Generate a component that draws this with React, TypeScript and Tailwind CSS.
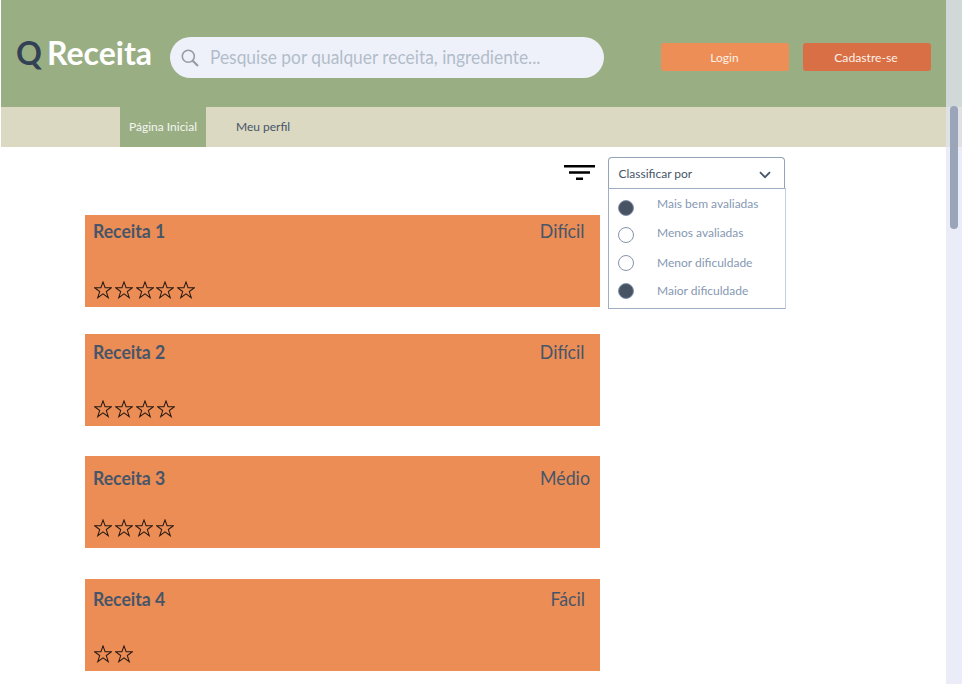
type Recipe = {
  name: string;
  level: string;
  card: string;
  title: string;
  levelBox: string;
  stars: string;
  gaps: string[];
};

const recipes: Recipe[] = [
  { name: "Receita 1", level: "Difícil", card: "", title: "pt-[4px]", levelBox: "pr-[15px]", stars: "mt-[38px]", gaps: ["", "ml-[3.3px]", "ml-[3.3px]", "ml-[1.7px]", "ml-[3.3px]"] },
  { name: "Receita 2", level: "Difícil", card: "mt-[27px]", title: "pt-[6px]", levelBox: "pr-[15px]", stars: "mt-[36px]", gaps: ["", "ml-[3.3px]", "ml-[3.3px]", "ml-[3.3px]"] },
  { name: "Receita 3", level: "Médio", card: "mt-[30px]", title: "pt-[10px]", levelBox: "pr-[10.5px]", stars: "mt-[29px]", gaps: ["", "ml-[3.3px]", "ml-[1.7px]", "ml-[3.3px]"] },
  { name: "Receita 4", level: "Fácil", card: "mt-[31px]", title: "pt-[8px]", levelBox: "pr-[15px]", stars: "mt-[34px]", gaps: ["", "ml-[3.3px]"] },
];

const options = [
  { label: "Mais bem avaliadas", on: true, text: "mt-[2px]", dot: "mt-[7px]" },
  { label: "Menos avaliadas", on: false, text: "mt-[2px]", dot: "mt-[5px]" },
  { label: "Menor dificuldade", on: false, text: "mt-[3px]", dot: "mt-[4px]" },
  { label: "Maior dificuldade", on: true, text: "mt-[2px]", dot: "mt-[3px]" },
];

function Star({ gap }: { gap: string }) {
  return (
    <svg className={`h-[18px] w-[18px] shrink-0 ${gap}`} viewBox="0.3 0.6 17.4 17" fill="none" stroke="#2a1a12" strokeWidth="1">
      <path d="M9 1.3L11 6.9H17.2L12.2 10.6L14.1 16.6L9 12.9L3.9 16.6L5.8 10.6L0.8 6.9H7Z" />
    </svg>
  );
}

function Header() {
  return (
    <header className="flex h-[107px] items-start bg-[#9aae84]">
      <div className="ml-[15px] mt-[31px] flex w-[154px] items-start text-[32px] font-bold leading-[44px]">
        <span className="w-[31px] text-[#334155]">Q</span>
        <span className="text-white">Receita</span>
      </div>
      <div className="mt-[37px] flex h-[41px] w-[434px] items-center rounded-full bg-[#eef1fa]">
        <svg className="ml-[11px] h-[18px] w-[18px]" viewBox="0 0 18 18" fill="none" stroke="#999ba1" strokeWidth="1.6">
          <circle cx="7.3" cy="7.3" r="6" />
          <path d="M11.5 11.5L17 17" strokeWidth="2.2" />
        </svg>
        <span className="ml-[11px] origin-left scale-x-[0.938] whitespace-nowrap text-[18.5px] text-[#b2bdc9]">Pesquise por qualquer receita, ingrediente...</span>
      </div>
      <button className="ml-[57px] mt-[43px] h-[28px] w-[128px] rounded-[3px] bg-[#ec8e55] pr-px pt-px text-[12px] text-[#fdf1e8]">Login</button>
      <button className="ml-[14px] mt-[43px] h-[28px] w-[128px] rounded-[3px] bg-[#d96f44] pr-[2px] pt-[2px] text-[12.2px] text-[#fdf1e8]">Cadastre-se</button>
    </header>
  );
}

function SortMenu() {
  return (
    <div className="w-[177px]">
      <div className="flex h-[31px] items-center justify-between rounded-t-[4px] border border-b-0 border-[#94a3b8] pl-[9.5px] pr-[13px] pt-[2px] text-[12px] text-[#475569]">
        <span>Classificar por</span>
        <svg className="mt-[2px] h-[8px] w-[12px]" viewBox="0 0 12 8" fill="none" stroke="#475569" strokeWidth="1.8">
          <path d="M1 1.2L6 6.2L11 1.2" />
        </svg>
      </div>
      <div className="h-[121px] w-[178px] border border-[#a0aec3] border-r-[#c5cedb] pt-[4px]">
        {options.map((o) => (
          <div key={o.label} className="flex h-[29px] items-start pl-[9px]">
            <span className={`h-[16px] w-[16px] rounded-full border-[1.5px] border-[#8494ad] ${o.dot} ${o.on ? "bg-[#475363]" : "bg-white"}`} />
            <span className={`ml-[23px] whitespace-nowrap text-[12px] leading-[18px] text-[#8698b3] ${o.text}`}>{o.label}</span>
          </div>
        ))}
      </div>
    </div>
  );
}

export default function App() {
  return (
    <div className="flex h-[684px] w-[962px] overflow-hidden bg-white font-['Lato',sans-serif]">
      <main className="w-[946px] pl-px">
        <Header />
        <nav className="flex h-[40px] bg-[#dbd9c2] pl-[119px] text-[12px]">
          <a className="flex w-[86px] items-center justify-center bg-[#9aae84] text-[#f5f7f0]">Página Inicial</a>
          <a className="ml-[30px] flex items-center text-[#475569]">Meu perfil</a>
        </nav>
        <div className="flex pl-[84px]">
          <section className="w-[515px]">
            <div className="flex h-[68px] justify-end pr-[5.5px] pt-[18px]">
              <svg className="h-[16px] w-[31px]" viewBox="0 0 31 16" fill="#000">
                <path d="M0 0H31V2.5H0ZM5 6.2H26V8.7H5ZM12 12.5H19V15H12Z" />
              </svg>
            </div>
            {recipes.map((r) => (
              <article key={r.name} className={`h-[92px] bg-[#eb8d55] ${r.card}`}>
                <div className={`flex justify-between pl-[7.5px] text-[18.5px] leading-[24px] text-[#475569] ${r.title} ${r.levelBox}`}>
                  <h2 className="origin-left scale-x-[0.95] font-bold">{r.name}</h2>
                  <span className="origin-right scale-x-[0.96]">{r.level}</span>
                </div>
                <div className={`flex pl-[8.6px] ${r.stars}`}>
                  {r.gaps.map((g, i) => (
                    <Star key={i} gap={g} />
                  ))}
                </div>
              </article>
            ))}
          </section>
          <aside className="ml-[8px] mt-[10px]">
            <SortMenu />
          </aside>
        </div>
      </main>
      <aside className="h-[684px] w-[16px] bg-[linear-gradient(#d0d9d8_107px,#e0e1e4_107px,#e0e1e4_147px,#eaecf7_147px)] pl-[4px] pt-[106px]">
        <div className="h-[123px] w-[8px] rounded-full bg-[#9aa5ba]" />
      </aside>
    </div>
  );
}
